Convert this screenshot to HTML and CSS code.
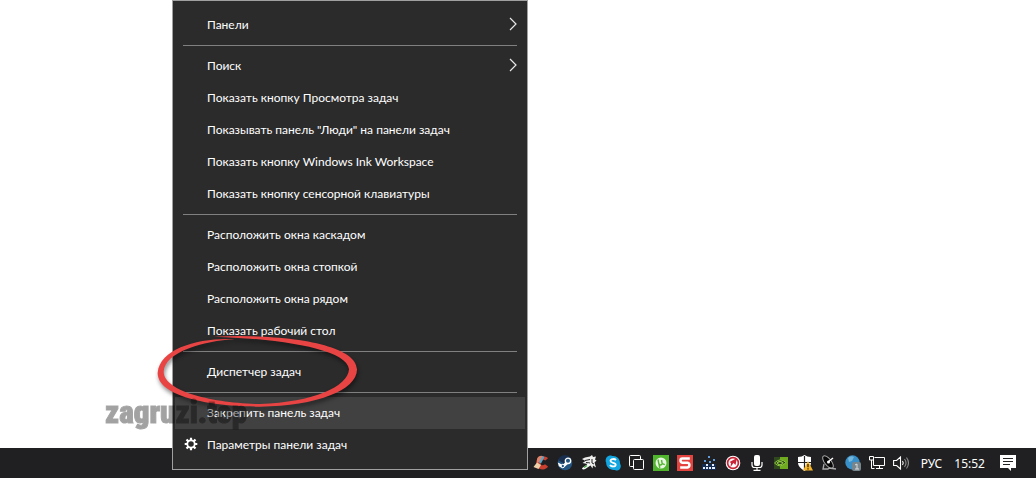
FILE: index.html
```html
<!DOCTYPE html>
<html lang="ru">
<head>
<meta charset="utf-8">
<title>Панель задач</title>
<link rel="stylesheet" href="styles.css">
</head>
<body>
<main class="desktop">
  <nav class="menu" aria-label="Меню панели задач">
    <button class="item">Панели<svg class="chevron" viewBox="0 0 8 14"><path d="M1 1l6 6-6 6"/></svg></button>
    <hr class="separator">
    <button class="item">Поиск<svg class="chevron" viewBox="0 0 8 14"><path d="M1 1l6 6-6 6"/></svg></button>
    <button class="item">Показать кнопку Просмотра задач</button>
    <button class="item">Показывать панель "Люди" на панели задач</button>
    <button class="item">Показать кнопку Windows Ink Workspace</button>
    <button class="item">Показать кнопку сенсорной клавиатуры</button>
    <hr class="separator">
    <button class="item">Расположить окна каскадом</button>
    <button class="item">Расположить окна стопкой</button>
    <button class="item">Расположить окна рядом</button>
    <button class="item">Показать рабочий стол</button>
    <hr class="separator">
    <button class="item marked">Диспетчер задач
      <svg class="ring" viewBox="189 30 630 249"><path d="M435 58C330 52 210 85 203 158C201 227 350 260 510 260C680 259 802 210 801 148C800 75 600 40 372 50C560 56 771 85 777 148C774 200 670 247 510 252C370 249 222 215 221 155C224 97 340 62 435 58Z"/></svg>
    </button>
    <hr class="separator">
    <button class="item active">Закрепить панель задач</button>
    <button class="item"><svg class="gear" viewBox="0 0 14 14"><circle cx="7" cy="7" r="3.7" fill="none" stroke="#fff" stroke-width="1.8"/><path d="M7 .7v2.6M7 10.700v2.600M.7 7h2.600M10.700 7h2.600M2.500 2.500l1.900 1.900M9.600 9.600l1.900 1.900M11.500 2.500L9.600 4.400M4.400 9.600l-1.900 1.900" stroke="#fff" stroke-width="2.200"/></svg>Параметры панели задач</button>
  </nav>
  <span class="watermark">zagruzi.top</span>
</main>
<footer class="taskbar">
  <div class="tray">
    <button class="icon" aria-label="CCleaner"><svg viewBox="0 0 16 16"><path d="M15 3.200C12 .2 5.500.5 3.500 5.600 2 10.500 5.500 15 10 14.600c2.200-.2 4-1.300 5-3l-3-2.300c-2.200 2-4.800 1-4.700-1.800.1-2.800 3-3.500 5-1.900z" fill="#c8402f"/><path d="M4 3.500C6 .3 9 .5 10 1.500L8 6 4 8z" fill="#e0836a"/><path d="M10.500 1.500L7 8" stroke="#58a6c8" stroke-width="2.200"/><path d="M4 7.500l4 2.500-2.500 4-5-2z" fill="#edcfaa"/></svg></button>
    <button class="icon" aria-label="Steam"><svg viewBox="0 0 16 16"><circle cx="8" cy="8" r="7.300" fill="#245580"/><path d="M1 5A7.500 7.500 0 0 1 15 5L8 9z" fill="#182f50"/><path d="M.8 7.500L6 10l3-4 3 2-4 3.500-2.500 1.800-3.600-2z" fill="#fff"/><circle cx="11" cy="5.800" r="2.700" fill="#245580" stroke="#fff" stroke-width="1.300"/><circle cx="5.800" cy="11" r="1.700" fill="#245580" stroke="#fff"/></svg></button>
    <button class="icon" aria-label="Утилита"><svg viewBox="0 0 16 16"><path d="M1 4l3-1.500 5-1 2-1.500 1 2 3-.5-1 3 1.500 1-2 2 1.500 5-3-2-.5 3-2-3-6 4-1-1.500 4-4-5-1 3-2z" fill="#eee"/><path d="M4 5.500l5-1M5 7.500l4 .5M11 4v4l2 1" stroke="#222" fill="none"/><path d="M1.500 14l7-5" stroke="#fff" stroke-width="2"/><path d="M3 12.500l3-2" stroke="#42a641" stroke-width="1.500"/></svg></button>
    <button class="icon" aria-label="Skype"><svg viewBox="0 0 16 16"><path d="M4.500.5C6 .1 7 1 8 1c4 0 7 3 7 7 0 1 1 2 .8 3.500-.4 3.500-3.300 4.800-5.800 3.400C5 15.700 1 12 1.200 7.800-.3 5 1.300 1.200 4.500.5z" fill="#12a5df"/><path d="M11 5C9.500 3.500 5.400 3.600 5.500 6c.1 2.400 5.500 1.200 5.200 3.800-.3 2.200-4.300 2.200-5.700.2" fill="none" stroke="#fff" stroke-width="1.800"/></svg></button>
    <button class="icon" aria-label="Окна"><svg viewBox="0 0 16 16" fill="none" stroke="#fff"><path d="M4.500 11.500h-3a1 1 0 0 1-1-1v-9a1 1 0 0 1 1-1h9a1 1 0 0 1 1 1v3"/><rect x="4.500" y="4.500" width="10" height="10" rx="1"/></svg></button>
    <button class="icon" aria-label="uTorrent"><svg viewBox="0 0 16 16"><path fill="#50b52d" d="M0 0h16v16H0z"/><circle cx="8" cy="8" r="5.500" fill="#e9f5e2"/><path d="M5 4.500l.8 4.200c.3 1.600 2.800 1.700 3.400 0L8.500 5M9.200 8.700l2.600 1M6 9l.8 4" fill="none" stroke="#50b52d" stroke-width="1.400"/></svg></button>
    <button class="icon" aria-label="Snagit"><svg viewBox="0 0 16 16"><path fill="#e3443f" d="M0 0h16v16H0z"/><path d="M12.800 3.500H5.300Q3.500 3.500 3.500 5.400T5.400 7.700h5.200q1.800.3 1.800 2.400T10.500 12.500H3.200" fill="none" stroke="#fff" stroke-width="2.500"/></svg></button>
    <button class="icon" aria-label="Монитор"><svg viewBox="0 0 16 16"><path fill="#142d50" d="M1 9h14v6H1z"/><path d="M2 12h2v2H2zM5 12h2v2H5zM8 12h2v2H8zM11 12h3v2h-3zM5 9h2v2H5zM11 9h2v2h-2z" fill="#e3edff"/><path d="M7 1h2v2H7zM3 5h2v2H3zM12 4h2v2h-2zM8 6h2v2H8z" fill="#5f9ddd"/></svg></button>
    <button class="icon" aria-label="Загрузчик"><svg viewBox="0 0 16 16"><circle cx="8" cy="8" r="7.300" fill="#fff"/><circle cx="8" cy="8" r="5.400" fill="none" stroke="#c82638" stroke-width="1.700"/><path d="M5.500 12l.5-4-1.500-1L12 3l-1.500 7-2-2z" fill="#c82638"/></svg></button>
    <button class="icon" aria-label="Микрофон"><svg viewBox="0 0 16 16"><rect x="5" y="0" width="6" height="11" rx="2" fill="#fff"/><path d="M3 7v3q0 2.500 2.500 2.500h5Q13 12.500 13 10V7M8 12v3.500M4.500 15.300h7" fill="none" stroke="#fff" stroke-width="1.200"/></svg></button>
    <button class="icon" aria-label="NVIDIA"><svg viewBox="0 0 16 16"><path fill="#30481e" d="M1 2h14v12H1z"/><path fill="#70aa20" d="M7 2h8v12H7z"/><path d="M1.500 8Q7 2 13 7.500 7 14 1.500 8z" fill="#2a3b1a" stroke="#8cc63f"/><path d="M4 8q3-3 6 0-3 3.500-6 0" fill="none" stroke="#8cc63f" stroke-width="1.200"/></svg></button>
    <button class="icon" aria-label="Защитник Windows"><svg viewBox="0 0 16 16"><path d="M7.500 0Q10 2 14 2v6q0 4-6.500 8Q1 12 1 8V2q4 0 6.500-2z" fill="#fff"/><path d="M7.500 1v14M1 7.500h13" stroke="#222" stroke-width="1.200"/><path d="M11 6l5 9.500H6z" fill="#f6b62b"/><path d="M11 9v3.200M11 13.200v1.300" stroke="#352600" stroke-width="1.300"/></svg></button>
    <button class="icon" aria-label="Спутник"><svg viewBox="0 0 16 16"><ellipse cx="7" cy="7" rx="3.300" ry="7.500" transform="rotate(-38 7 7)" fill="#080808" stroke="#aaa"/><path d="M7 7l5-4" stroke="#fff" stroke-width="1.500"/><circle cx="7.500" cy="7" r="1.500" fill="#fff"/><path d="M3 9l-1 5h5l1-1 7 1" fill="none" stroke="#aaa" stroke-width="1.300"/></svg></button>
    <button class="icon" aria-label="Уведомления: 1"><svg viewBox="0 0 16 16"><circle cx="7.500" cy="7.500" r="7.200" fill="#398fc7"/><path d="M3 3q3-3 6-1l-2 4-3 1z" fill="#74b6dc"/><rect x="7" y="7" width="9" height="9" rx="2" fill="#77858d"/><path d="M10 10l2-1v5M10 14h4" fill="none" stroke="#ddd"/></svg></button>
    <button class="icon" aria-label="Сеть"><svg viewBox="0 0 16 16" fill="none" stroke="#fff"><path d="M5.500 2.500h10v8h-11V5M10.500 10.500v3M7 13.500h7M2.500 5v8.500h3"/><path d="M.5 1.500h4v3.500h-4z"/></svg></button>
    <button class="icon" aria-label="Громкость"><svg viewBox="0 0 16 16" fill="none" stroke="#fff" stroke-width="1.100"><path d="M.6 5.500h3L7.500 2v12l-3.900-3.500h-3zM9.500 6q1.500 2 0 4"/><path d="M11.500 4q3 4 0 8M13.500 2.500q4 5.500 0 11" stroke="#8b8b8b"/></svg></button>
  </div>
  <button class="label">РУС</button>
  <button class="label">15:52</button>
  <button class="icon" aria-label="Центр уведомлений"><svg viewBox="0 0 16 16"><path d="M0 0h16v13h-5v3l-3-3H0z" fill="#fff"/><path d="M3 3.500h10M3 6.500h10M3 9.500h7" stroke="#222" stroke-width="1.100"/></svg></button>
</footer>
</body>
</html>
```
FILE: styles.css
```css
* { box-sizing: border-box; }
body {
  margin: 0;
  min-height: 100vh;
  display: flex;
  flex-direction: column;
  background: #fff;
  color: #fff;
  font-family: "Segoe UI", Lato, "Noto Sans", sans-serif;
  font-size: 12px;
}
button {
  border: 0;
  padding: 0;
  background: none;
  color: inherit;
  font: inherit;
}
.desktop { flex: 1; }
.menu {
  position: absolute;
  top: 0;
  left: 172px;
  z-index: 1;
  width: 356px;
  padding: 8px 2px;
  background: #2b2b2b;
  border: 1px solid #a0a0a0;
}
.item {
  position: relative;
  display: flex;
  align-items: center;
  width: 100%;
  height: 32px;
  padding: 0 8px 2px 32px;
  text-align: left;
}
.item.active { background: #414141; }
.separator {
  height: 1px;
  margin: 4px 8px;
  border: 0;
  background: #808080;
}
.chevron {
  width: 8px;
  height: 14px;
  margin-left: auto;
  fill: none;
  stroke: #e8e8e8;
  stroke-width: 1.2;
}
.gear {
  position: absolute;
  left: 9px;
  width: 14px;
  height: 14px;
}
.marked { z-index: 1; }
.ring {
  position: absolute;
  left: -22px;
  top: -26px;
  width: 210px;
  height: 83px;
  fill: #e94444;
  filter: drop-shadow(1px 3px 2px rgba(0, 0, 0, 0.45));
  pointer-events: none;
}
.watermark {
  position: absolute;
  left: 105px;
  top: 396px;
  z-index: 2;
  color: #000;
  opacity: 0.36;
  font: 900 31px/34px Impact, "Roboto Condensed", "Liberation Sans Narrow", "Liberation Sans", sans-serif;
  -webkit-text-stroke: 1px #000;
  pointer-events: none;
}
.taskbar {
  display: flex;
  align-items: center;
  justify-content: flex-end;
  gap: 12px;
  height: 30px;
  padding-right: 20px;
  background: #202022;
}
.tray {
  display: flex;
  gap: 8px;
}
.icon {
  width: 16px;
  height: 16px;
}
.icon svg {
  display: block;
  width: 16px;
  height: 16px;
}
.label { font-family: "Segoe UI", "Noto Sans", sans-serif; }
.label + .icon { margin-left: 3px; }
```
